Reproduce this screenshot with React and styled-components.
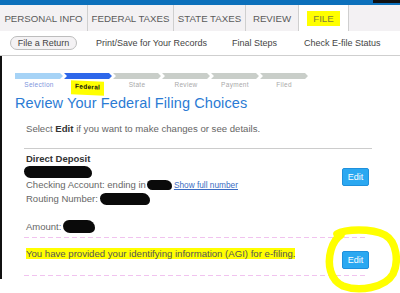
import React from "react";
import styled, { createGlobalStyle } from "styled-components";

const Global = createGlobalStyle`
  html, body { margin: 0; padding: 0; background: #fff; }
  body { font-family: "Liberation Sans", Arial, sans-serif; }
  * { box-sizing: border-box; }
`;

const Page = styled.div`
  position: relative;
  width: 400px;
  height: 293px;
  overflow: hidden;
  background: #fff;
`;

const TopStrip = styled.div`
  height: 5px;
  background: #0c70bb;
  display: flex;
  justify-content: flex-end;
  align-items: flex-start;
`;

const StripCorner = styled.div`
  width: 27px;
  height: 3px;
  background: #111;
`;

const TabBar = styled.nav`
  height: 26px;
  display: flex;
  background: #f3f1f3;
`;

const Tab = styled.div`
  width: ${(p) => p.$w}px;
  display: flex;
  align-items: center;
  justify-content: center;
  border-right: 1px solid #cfcfcf;
  background: ${(p) => (p.$active ? "#fff" : "transparent")};
  font-size: 9.7px;
  color: #5a5a5a;
  white-space: nowrap;
`;

const TabHighlight = styled.span`
  background: #ffff00;
  padding: 2px 6px;
  color: #7d7d3c;
`;

const SubNav = styled.div`
  height: 25px;
  border-bottom: 1px solid #cfcfcf;
  display: flex;
  align-items: center;
  padding-left: 10px;
  font-size: 9px;
  color: #444;
`;

const Pill = styled.span`
  height: 14px;
  width: 67px;
  border: 1px solid #bdbdbd;
  border-radius: 7px;
  background: #f4f2f4;
  display: flex;
  align-items: center;
  justify-content: center;
  white-space: nowrap;
`;

const NavLink = styled.span`
  margin-left: ${(p) => p.$gap}px;
  white-space: nowrap;
`;

const Main = styled.main`
  height: 223px;
  border-left: 2px solid #111;
  padding: 17px 0 0 13px;
`;

const Steps = styled.div`
  display: flex;
  gap: 1px;
`;

const Step = styled.div`
  width: 48px;
  height: 6px;
  background: ${(p) => p.$color};
  clip-path: ${(p) =>
    p.$first
      ? "polygon(0 0, calc(100% - 3px) 0, 100% 50%, calc(100% - 3px) 100%, 0 100%)"
      : "polygon(0 0, calc(100% - 3px) 0, 100% 50%, calc(100% - 3px) 100%, 0 100%, 3px 50%)"};
`;

const StepLabels = styled.div`
  display: flex;
  gap: 1px;
  margin-top: 2px;
  height: 8px;
`;

const StepLabel = styled.div`
  width: 48px;
  text-align: center;
  font-size: 6.5px;
  line-height: 8px;
  letter-spacing: 0.3px;
  color: ${(p) => p.$color};
  font-weight: ${(p) => (p.$bold ? 700 : 400)};
`;

const LabelMark = styled.span`
  background: #ffff00;
  padding: 2px 4px 4px;
  display: inline-block;
  line-height: 8px;
  transform: skewY(3deg);
`;

const Heading = styled.h1`
  margin: 5px 0 0;
  font-size: 14.5px;
  line-height: 18px;
  font-weight: 400;
  letter-spacing: 0.1px;
  color: #2b7bd4;
`;

const Intro = styled.p`
  margin: 11px 0 0 11px;
  font-size: 9.6px;
  line-height: 12px;
  color: #666;
  b { color: #333; }
`;

const Card = styled.div`
  margin-left: 9px;
  width: 348px;
`;

const Rule = styled.div`
  margin-top: 13px;
  border-top: 1px solid #cccccc;
`;

const Section = styled.div`
  height: 88px;
  display: flex;
  justify-content: space-between;
  align-items: flex-start;
  padding-top: 4px;
`;

const Details = styled.div`
  padding-left: 2px;
  display: flex;
  flex-direction: column;
  align-items: flex-start;
`;

const Title = styled.div`
  font-size: 9.5px;
  line-height: 12px;
  font-weight: 700;
  color: #333;
`;

const Line = styled.div`
  margin-top: ${(p) => p.$mt || 0}px;
  font-size: 9.5px;
  line-height: 12px;
  color: #666;
  white-space: nowrap;
  display: flex;
  align-items: center;
`;

const Blob = styled.span`
  display: inline-block;
  width: ${(p) => p.$w}px;
  height: ${(p) => p.$h}px;
  margin: ${(p) => p.$m || "0"};
  background: #0a0a0a;
  border-radius: ${(p) => p.$h / 2}px ${(p) => p.$h / 2 + 2}px ${(p) => p.$h / 2 - 1}px ${(p) => p.$h / 2 + 1}px;
`;

const ShowLink = styled.a`
  margin-left: 2px;
  font-size: 8.3px;
  color: #3b6cc2;
  text-decoration: underline;
`;

const EditButton = styled.button`
  width: 27px;
  height: 18px;
  margin-top: ${(p) => p.$mt}px;
  margin-right: 3px;
  padding: 0;
  border: 1px solid #1f90dc;
  border-radius: 2px;
  background: #2ba8f1;
  color: #fff;
  font-family: "Liberation Sans", Arial, sans-serif;
  font-size: 9px;
`;

const Dashed = styled.div`
  width: 344px;
  height: 1px;
  background: repeating-linear-gradient(
    to right,
    #f1c3ef 0 5px,
    transparent 5px 8px
  );
`;

const AgiRow = styled.div`
  height: 37px;
  display: flex;
  justify-content: space-between;
  align-items: flex-start;
`;

const AgiText = styled.div`
  margin-top: 10px;
  padding-left: 2px;
  font-size: 9.6px;
  line-height: 12px;
  color: #555;
  span { background: #ffff00; }
`;

const Circle = styled.svg`
  position: absolute;
  left: 323px;
  top: 226px;
  width: 78px;
  height: 68px;
  pointer-events: none;
`;

const tabs = [
  { label: "PERSONAL INFO", w: 88 },
  { label: "FEDERAL TAXES", w: 86 },
  { label: "STATE TAXES", w: 72 },
  { label: "REVIEW", w: 53 },
  { label: "FILE", w: 50, active: true },
];

const steps = [
  { label: "Selection", color: "#a6d3f6", text: "#7d95dc" },
  { label: "Federal", color: "#2d67ea", text: "#111", current: true },
  { label: "State", color: "#c9cec9", text: "#a9a9a9" },
  { label: "Review", color: "#c9cec9", text: "#a9a9a9" },
  { label: "Payment", color: "#c9cec9", text: "#a9a9a9" },
  { label: "Filed", color: "#c9cec9", text: "#a9a9a9" },
];

export default function App() {
  return (
    <Page>
      <Global />
      <TopStrip>
        <StripCorner />
      </TopStrip>
      <TabBar>
        {tabs.map((t) => (
          <Tab key={t.label} $w={t.w} $active={t.active}>
            {t.active ? <TabHighlight>{t.label}</TabHighlight> : t.label}
          </Tab>
        ))}
      </TabBar>
      <SubNav>
        <Pill>File a Return</Pill>
        <NavLink $gap={19}>Print/Save for Your Records</NavLink>
        <NavLink $gap={25}>Final Steps</NavLink>
        <NavLink $gap={27}>Check E-file Status</NavLink>
      </SubNav>
      <Main>
        <Steps>
          {steps.map((s, i) => (
            <Step key={s.label} $color={s.color} $first={i === 0} />
          ))}
        </Steps>
        <StepLabels>
          {steps.map((s) => (
            <StepLabel key={s.label} $color={s.text} $bold={s.current}>
              {s.current ? <LabelMark>{s.label}</LabelMark> : s.label}
            </StepLabel>
          ))}
        </StepLabels>
        <Heading>Review Your Federal Filing Choices</Heading>
        <Intro>
          Select <b>Edit</b> if you want to make changes or see details.
        </Intro>
        <Card>
          <Rule />
          <Section>
            <Details>
              <Title>Direct Deposit</Title>
              <Blob $w={68} $h={12} $m="1px 0 0 -2px" />
              <Line $mt={1}>
                Checking Account: ending in
                <Blob $w={25} $h={10} $m="0 0 0 1px" />
                <ShowLink>Show full number</ShowLink>
              </Line>
              <Line $mt={2}>
                Routing Number:
                <Blob $w={50} $h={12} $m="0 0 0 2px" />
              </Line>
              <Line $mt={15}>
                Amount:
                <Blob $w={32} $h={13} $m="0 0 0 2px" />
              </Line>
            </Details>
            <EditButton $mt={15}>Edit</EditButton>
          </Section>
          <Dashed />
          <AgiRow>
            <AgiText>
              <span>You have provided your identifying information (AGI) for e-filing.</span>
            </AgiText>
            <EditButton $mt={13}>Edit</EditButton>
          </AgiRow>
          <Dashed />
        </Card>
      </Main>
      <Circle viewBox="0 0 78 68">
        <path
          d="M14 8 C 22 3, 48 2, 62 9 C 74 16, 76 36, 70 48 C 62 62, 36 66, 20 60 C 7 54, 4 38, 8 24 C 10 17, 13 12, 18 9"
          fill="none"
          stroke="#ffff00"
          strokeWidth="7.5"
          strokeLinecap="round"
        />
      </Circle>
    </Page>
  );
}
